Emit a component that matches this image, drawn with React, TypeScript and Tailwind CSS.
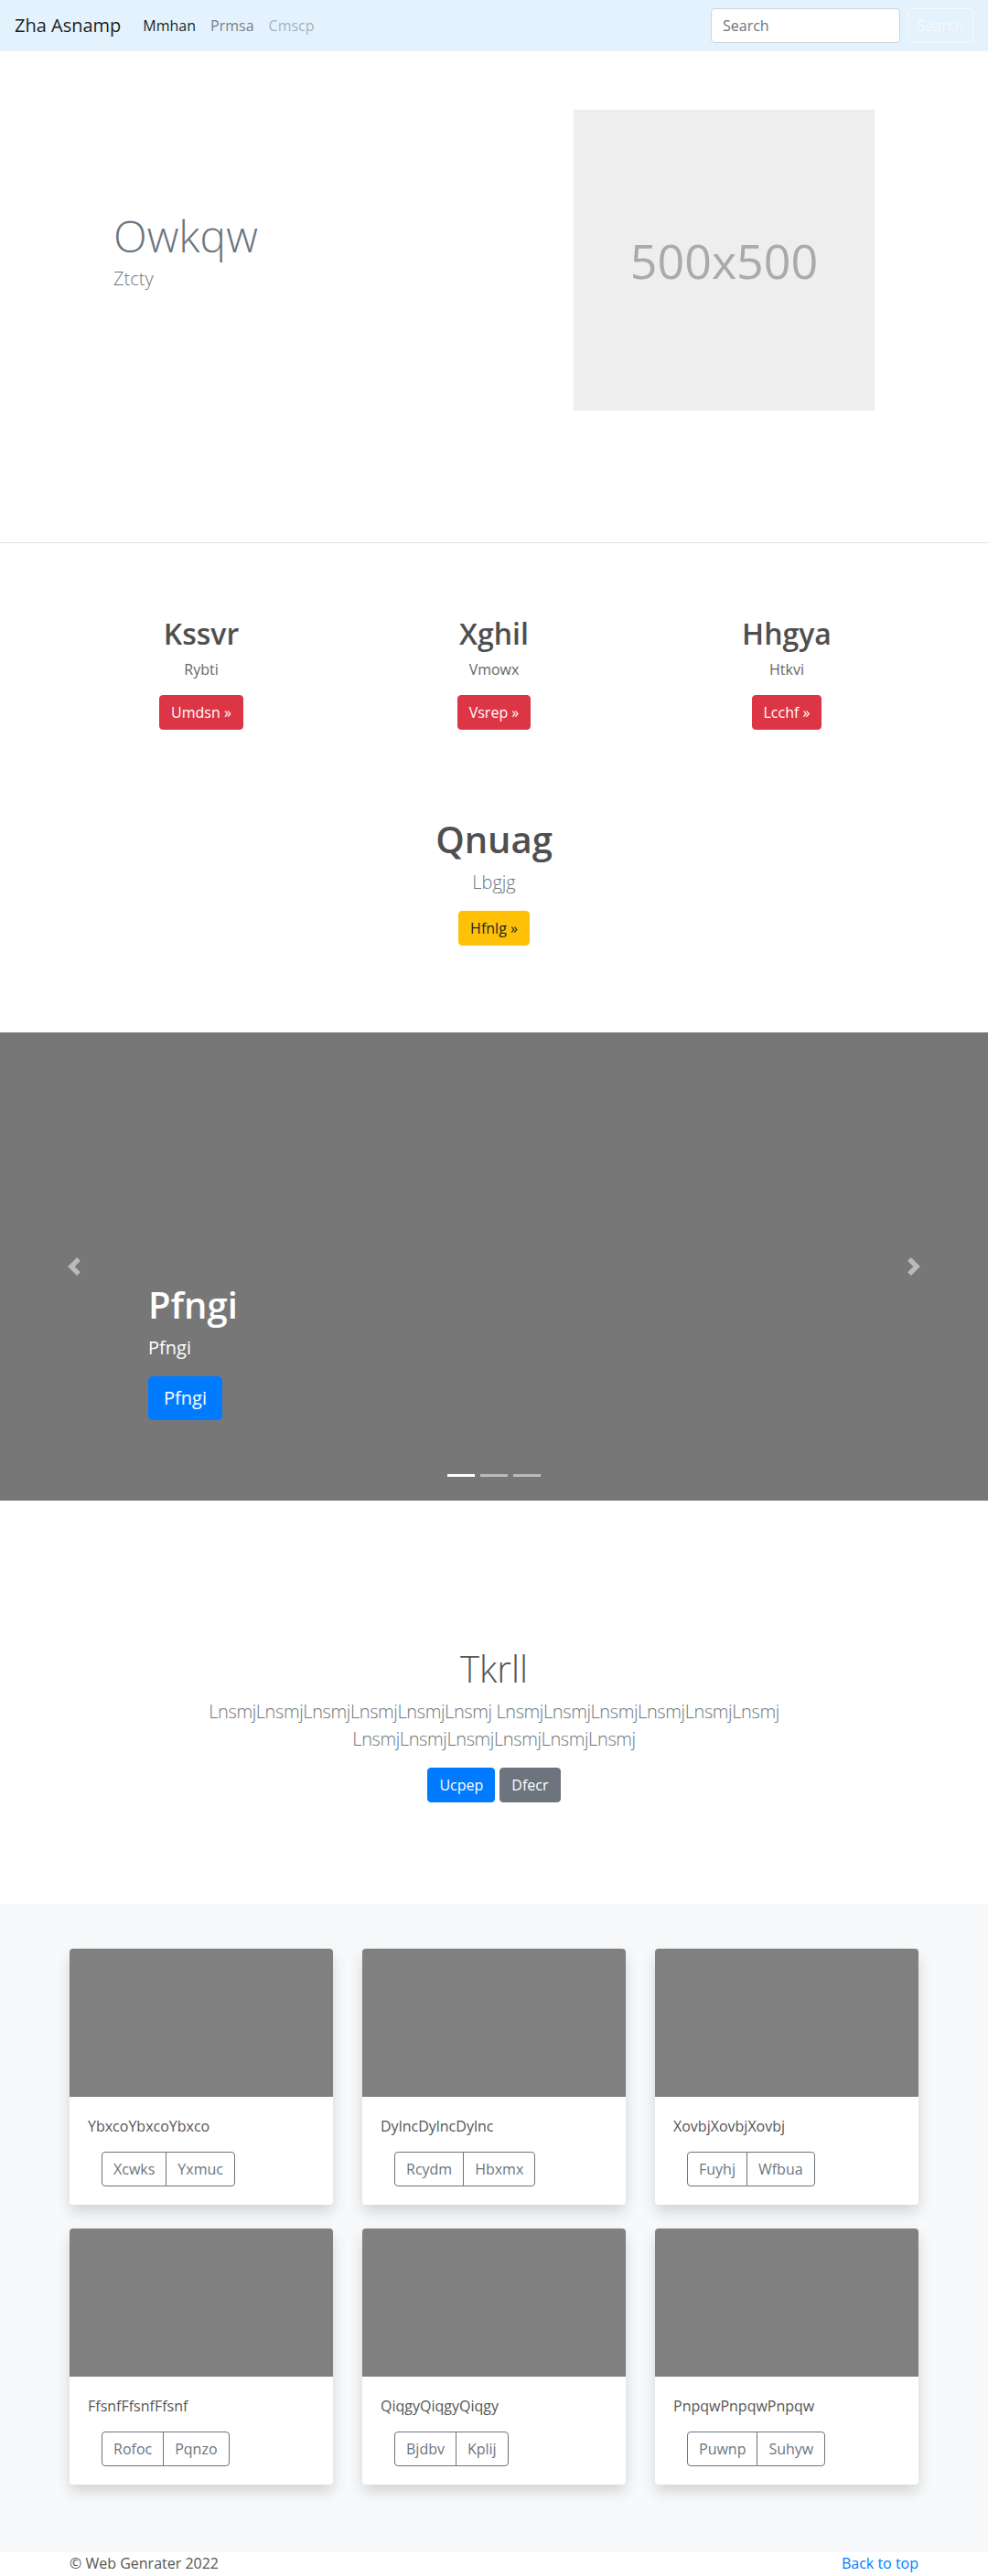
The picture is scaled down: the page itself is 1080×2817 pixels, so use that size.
import React from "react";

const cards = [
  { title: "YbxcoYbxcoYbxco", a: "Xcwks", b: "Yxmuc" },
  { title: "DylncDylncDylnc", a: "Rcydm", b: "Hbxmx" },
  { title: "XovbjXovbjXovbj", a: "Fuyhj", b: "Wfbua" },
  { title: "FfsnfFfsnfFfsnf", a: "Rofoc", b: "Pqnzo" },
  { title: "QiqgyQiqgyQiqgy", a: "Bjdbv", b: "Kplij" },
  { title: "PnpqwPnpqwPnpqw", a: "Puwnp", b: "Suhyw" },
];

const features = [
  { title: "Kssvr", text: "Rybti", btn: "Umdsn" },
  { title: "Xghil", text: "Vmowx", btn: "Vsrep" },
  { title: "Hhgya", text: "Htkvi", btn: "Lcchf" },
];

const lnsmj = "LnsmjLnsmjLnsmjLnsmjLnsmjLnsmj";

const App = () => {
  return (
    <div className="font-['Open_Sans','Segoe_UI',sans-serif] text-[#212529] bg-white">
      {/* Navbar */}
      <nav className="h-14 bg-[#e3f2fd] flex items-center px-4">
        <a href="#" className="text-[20px] leading-[1.5] text-black/90 mr-4">
          Zha Asnamp
        </a>
        <ul className="flex text-base leading-6">
          <li><a href="#" className="px-2 py-2 text-black/90">Mmhan</a></li>
          <li><a href="#" className="px-2 py-2 text-black/50">Prmsa</a></li>
          <li><a href="#" className="px-2 py-2 text-black/30">Cmscp</a></li>
        </ul>
        <form className="ml-auto flex items-center">
          <input
            placeholder="Search"
            className="w-[207px] h-[38px] px-3 bg-white border border-[#ced4da] rounded text-base placeholder:text-[#6c757d] outline-none"
          />
          <button
            type="button"
            className="ml-2 w-[72px] h-[38px] border border-[#f8f9fa] rounded text-[#f8f9fa] text-base"
          >
            Search
          </button>
        </form>
      </nav>

      {/* Hero */}
      <section className="border-b border-[#dee2e6] pt-16 pb-[144px]">
        <div className="flex items-center">
          <div className="w-[627px] pl-[124px]">
            <h1 className="text-[48px] leading-[1.2] font-light text-[#6c757d] mb-[3px]">Owkqw</h1>
            <p className="text-[20px] leading-[1.5] font-light text-[#6c757d] mb-5">Ztcty</p>
          </div>
          <div className="w-[329px] h-[329px] bg-[#eeeeee] flex items-center justify-center text-[52px] text-[#aaaaaa]">
            500x500
          </div>
        </div>
      </section>

      {/* Features */}
      <section className="pt-20 pb-[95px]">
        <div className="w-[960px] mx-auto grid grid-cols-3 text-center">
          {features.map((f) => (
            <div key={f.title}>
              <h2 className="text-[32px] leading-[1.2] font-semibold text-[#4f4f4f] mb-2">{f.title}</h2>
              <p className="text-base leading-6 text-[#666] mb-4">{f.text}</p>
              <a href="#" className="inline-block px-3 py-1.5 text-base leading-6 text-white bg-[#dc3545] border border-[#dc3545] rounded">
                {f.btn} »
              </a>
            </div>
          ))}
        </div>
        <div className="mt-[96px] text-center">
          <h1 className="text-[40px] leading-[1.2] font-semibold text-[#4f4f4f] mb-2">Qnuag</h1>
          <p className="text-[20px] leading-[1.5] font-light text-[#6c757d] mb-4">Lbgjg</p>
          <a href="#" className="inline-block px-3 py-1.5 text-base leading-6 text-[#212529] bg-[#ffc107] border border-[#ffc107] rounded">
            Hfnlg »
          </a>
        </div>
      </section>

      {/* Carousel */}
      <section className="relative h-[512px] bg-[#777777] flex flex-col justify-end pl-[162px] pb-[88px]">
        <h1 className="text-[40px] leading-[1.2] font-semibold text-white mb-2">Pfngi</h1>
        <p className="text-[20px] leading-[1.5] text-white mb-4">Pfngi</p>
        <div>
          <a href="#" className="inline-block px-4 py-2 text-[20px] leading-[1.5] text-white bg-[#007bff] border border-[#007bff] rounded-[4.8px]">
            Pfngi
          </a>
        </div>
        <a href="#" className="absolute left-0 top-0 bottom-0 w-[15%] flex items-center justify-center opacity-50">
          <svg width="20" height="20" viewBox="0 0 8 8" fill="#fff">
            <path d="M5.25 0l-4 4 4 4 1.5-1.5L4.25 4l2.5-2.5L5.25 0z" />
          </svg>
        </a>
        <a href="#" className="absolute right-0 top-0 bottom-0 w-[15%] flex items-center justify-center opacity-50">
          <svg width="20" height="20" viewBox="0 0 8 8" fill="#fff">
            <path d="M2.75 0l-1.5 1.5L3.75 4l-2.5 2.5L2.75 8l4-4-4-4z" />
          </svg>
        </a>
        <div className="absolute bottom-[26px] left-0 right-0 flex justify-center gap-[6px]">
          <span className="w-[30px] h-[3px] bg-white" />
          <span className="w-[30px] h-[3px] bg-white/50" />
          <span className="w-[30px] h-[3px] bg-white/50" />
        </div>
      </section>

      {/* Jumbotron */}
      <section className="pt-[160px] pb-[103px] text-center">
        <h1 className="text-[40px] leading-[1.2] font-light text-[#555] mb-2">Tkrll</h1>
        <p className="max-w-[700px] mx-auto text-[20px] leading-[1.5] font-light tracking-[-0.02em] text-[#6c757d] mb-4">
          {lnsmj} {lnsmj} {lnsmj}
        </p>
        <div className="my-2 flex justify-center gap-[5px]">
          <a href="#" className="px-3 py-1.5 text-base leading-6 text-white bg-[#007bff] border border-[#007bff] rounded">Ucpep</a>
          <a href="#" className="px-3 py-1.5 text-base leading-6 text-white bg-[#6c757d] border border-[#6c757d] rounded">Dfecr</a>
        </div>
      </section>

      {/* Album */}
      <section className="bg-[#f8f9fa] pt-[49px] pb-[74px]">
        <div className="w-[928px] mx-auto grid grid-cols-3 gap-x-8 gap-y-[26px]">
          {cards.map((c) => (
            <div key={c.title} className="bg-white rounded overflow-hidden shadow-[0_8px_16px_rgba(0,0,0,0.15)]">
              <div className="h-[162px] bg-[#808080]" />
              <div className="p-5">
                <p className="text-base leading-6 text-[#555] mb-4">{c.title}</p>
                <div className="inline-flex ml-[15px]">
                  <button className="px-3 py-1.5 text-base leading-6 text-[#6c757d] border border-[#6c757d] rounded-l">{c.a}</button>
                  <button className="-ml-px px-3 py-1.5 text-base leading-6 text-[#6c757d] border border-[#6c757d] rounded-r">{c.b}</button>
                </div>
              </div>
            </div>
          ))}
        </div>
      </section>

      {/* Footer */}
      <footer className="h-6 w-[928px] mx-auto flex justify-between text-base leading-6">
        <span className="text-[#555]">© Web Genrater 2022</span>
        <a href="#" className="text-[#007bff]">Back to top</a>
      </footer>
    </div>
  );
};

export default App;
